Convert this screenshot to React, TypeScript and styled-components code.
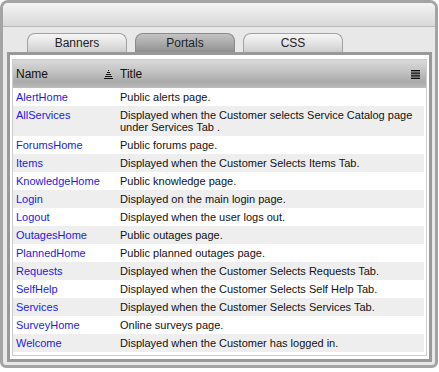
import React from "react";
import styled, { createGlobalStyle } from "styled-components";

const GlobalStyle = createGlobalStyle`
  html, body {
    margin: 0;
    padding: 0;
    background: #ffffff;
    font-family: "Liberation Sans", Arial, sans-serif;
  }
`;

interface Portal {
  name: string;
  title: string;
}

const portals: Portal[] = [
  { name: "AlertHome", title: "Public alerts page." },
  {
    name: "AllServices",
    title:
      "Displayed when the Customer selects Service Catalog page under Services Tab .",
  },
  { name: "ForumsHome", title: "Public forums page." },
  { name: "Items", title: "Displayed when the Customer Selects Items Tab." },
  { name: "KnowledgeHome", title: "Public knowledge page." },
  { name: "Login", title: "Displayed on the main login page." },
  { name: "Logout", title: "Displayed when the user logs out." },
  { name: "OutagesHome", title: "Public outages page." },
  { name: "PlannedHome", title: "Public planned outages page." },
  { name: "Requests", title: "Displayed when the Customer Selects Requests Tab." },
  { name: "SelfHelp", title: "Displayed when the Customer Selects Self Help Tab." },
  { name: "Services", title: "Displayed when the Customer Selects Services Tab." },
  { name: "SurveyHome", title: "Online surveys page." },
  { name: "Welcome", title: "Displayed when the Customer has logged in." },
];

const tabs = ["Banners", "Portals", "CSS"];

const Frame = styled.div`
  box-sizing: border-box;
  width: 438px;
  height: 368px;
  border: 3px solid #a4a4a4;
  border-radius: 8px 8px 6px 6px;
  background: #e8e8e8;
  display: flex;
  flex-direction: column;
  overflow: hidden;
`;

const TopBar = styled.div`
  height: 23px;
  flex: none;
  background: linear-gradient(#f4f4f4, #e6e6e6 50%, #d9d9d9);
  border-bottom: 1px solid #b6b6b6;
`;

const Body = styled.div`
  flex: 1;
  display: flex;
  flex-direction: column;
  padding: 6px 3px 3px 4px;
  min-height: 0;
`;

const TabRow = styled.div`
  display: flex;
  gap: 8px;
  padding-left: 20px;
  height: 19px;
  flex: none;
`;

const Tab = styled.div<{ $active?: boolean }>`
  box-sizing: border-box;
  width: 100px;
  height: 19px;
  border: 1px solid ${(p) => (p.$active ? "#8a8a8a" : "#a2a2a2")};
  border-bottom: none;
  border-radius: 8px 8px 0 0;
  background: ${(p) =>
    p.$active
      ? "linear-gradient(#c4c4c4, #a6a6a6 60%, #8f8f8f)"
      : "linear-gradient(#f6f6f6, #e2e2e2 55%, #cdcdcd)"};
  display: flex;
  align-items: center;
  justify-content: center;
  font-size: 12px;
  color: #222;
`;

const Panel = styled.div`
  flex: 1;
  box-sizing: border-box;
  border: 3px solid #999999;
  background: #ffffff;
  padding: 4px 2px 3px 2px;
  display: flex;
  flex-direction: column;
  min-height: 0;
`;

const Grid = styled.div`
  flex: 1;
  border: 1px solid #cccccc;
  padding: 0 2px 3px 0;
`;

const HeaderRow = styled.div`
  display: grid;
  grid-template-columns: 104px 1fr;
  height: 28px;
  background: linear-gradient(#d9d9d9 0%, #c4c4c4 40%, #aaaaaa 78%, #bcbcbc 100%);
  margin-right: -2px;
`;

const HeaderCell = styled.div`
  display: flex;
  align-items: center;
  padding: 0 3px;
  font-size: 12px;
  color: #111;
  justify-content: space-between;
`;

const Row = styled.div<{ $alt: boolean }>`
  display: grid;
  grid-template-columns: 104px 1fr;
  background: ${(p) => (p.$alt ? "#eeeeee" : "#ffffff")};
  font-size: 11px;
  line-height: 12px;
`;

const NameCell = styled.a`
  padding: 3px 3px;
  color: #1a1ae6;
  text-decoration: none;
`;

const TitleCell = styled.div`
  padding: 3px 6px 3px 3px;
  color: #111;
`;

const SortIcon = () => (
  <svg width="9" height="9" viewBox="0 0 9 9" style={{ marginRight: 1 }}>
    <g stroke="#111" strokeWidth="1" shapeRendering="crispEdges">
      <line x1="4" y1="0.5" x2="5" y2="0.5" />
      <line x1="3" y1="2.5" x2="6" y2="2.5" />
      <line x1="2" y1="4.5" x2="7" y2="4.5" />
      <line x1="1" y1="6.5" x2="8" y2="6.5" />
      <line x1="0" y1="8.5" x2="9" y2="8.5" />
    </g>
  </svg>
);

const MenuIcon = () => (
  <svg width="9" height="9" viewBox="0 0 9 9" style={{ marginRight: 3 }}>
    <g stroke="#111" strokeWidth="1">
      <line x1="0" y1="0.5" x2="9" y2="0.5" />
      <line x1="0" y1="2.1" x2="9" y2="2.1" />
      <line x1="0" y1="3.7" x2="9" y2="3.7" />
      <line x1="0" y1="5.3" x2="9" y2="5.3" />
      <line x1="0" y1="6.9" x2="9" y2="6.9" />
      <line x1="0" y1="8.5" x2="9" y2="8.5" />
    </g>
  </svg>
);

export default function App() {
  return (
    <>
      <GlobalStyle />
      <Frame>
        <TopBar />
        <Body>
          <TabRow>
            {tabs.map((t) => (
              <Tab key={t} $active={t === "Portals"}>
                {t}
              </Tab>
            ))}
          </TabRow>
          <Panel>
            <Grid>
              <HeaderRow>
                <HeaderCell>
                  Name
                  <SortIcon />
                </HeaderCell>
                <HeaderCell>
                  Title
                  <MenuIcon />
                </HeaderCell>
              </HeaderRow>
              {portals.map((p, i) => (
                <Row key={p.name} $alt={i % 2 === 1}>
                  <NameCell href="#">{p.name}</NameCell>
                  <TitleCell>{p.title}</TitleCell>
                </Row>
              ))}
            </Grid>
          </Panel>
        </Body>
      </Frame>
    </>
  );
}
